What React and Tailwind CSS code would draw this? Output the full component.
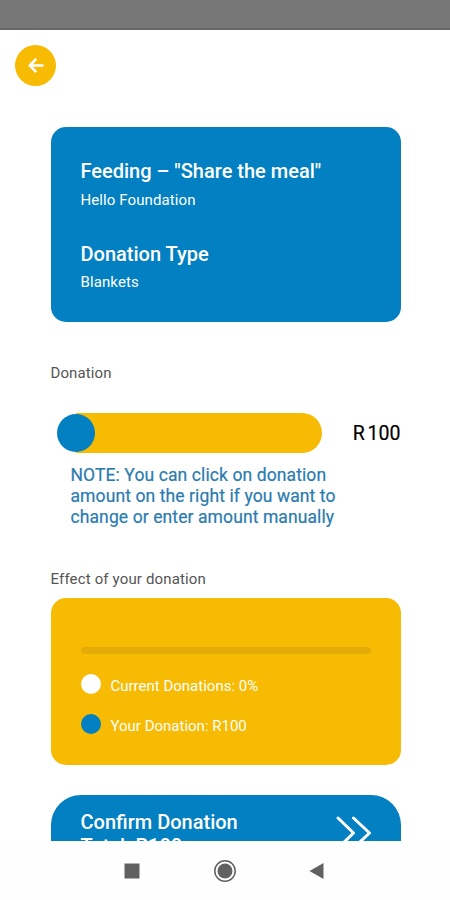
const legend = [
  { label: 'Current Donations: 0%', dot: 'bg-white' },
  { label: 'Your Donation: R100', dot: 'bg-[#0280c1]' },
];

function StatusBar() {
  return <div className="h-[30px] shrink-0 bg-[#777777] border-b-2 border-[#686868]" />;
}

function BackButton() {
  return (
    <button aria-label="Back" className="ml-[15px] mt-[15px] flex h-[41px] w-[41px] items-center justify-center rounded-full bg-[#f6bb02]">
      <svg width="16" height="16" viewBox="0 0 16 16" fill="none" stroke="white" strokeWidth="2.6">
        <path d="M15.5 7.5H2" />
        <path d="M8.2 0.8L1.8 7.5l6.4 6.7" />
      </svg>
    </button>
  );
}

function NavBar() {
  return (
    <nav className="flex h-[59px] shrink-0 items-center justify-center bg-[#fefefe]">
      <svg width="202" height="24" viewBox="0 0 202 24">
        <rect x="0.5" y="4.5" width="15" height="15" fill="#616161" />
        <circle cx="101" cy="12" r="10.2" fill="none" stroke="#616161" strokeWidth="1.5" />
        <circle cx="101" cy="12" r="7.5" fill="#616161" />
        <path d="M185.5 12L199.5 4v16z" fill="#616161" />
      </svg>
    </nav>
  );
}

export default function App() {
  return (
    <div className="flex h-[900px] w-[450px] flex-col overflow-hidden bg-white font-['Roboto',sans-serif]">
      <StatusBar />

      <main className="h-[811px] shrink-0 overflow-hidden">
        <BackButton />

        <div className="ml-[50.5px] mt-[41px] w-[350px]">
          {/* Campaign */}
          <div className="h-[194.5px] rounded-[15px] bg-[#0280c1] px-[30px] pt-8 text-white">
            <h1 className="text-[20px] leading-6 font-medium whitespace-nowrap">Feeding – "Share the meal"</h1>
            <p className="mt-2 text-[15px] leading-[18px] tracking-[0.1px]">Hello Foundation</p>
            <h2 className="mt-[33px] text-[20px] leading-6 font-medium">Donation Type</h2>
            <p className="mt-[7px] text-[15px] leading-[18px] tracking-[0.1px]">Blankets</p>
          </div>

          {/* Amount */}
          <p className="mt-[42.5px] text-[15px] leading-[18px] tracking-[0.1px] text-[#555555]">Donation</p>
          <div className="mt-[31px] flex items-center justify-between">
            <div className="ml-[6px] flex h-10 w-[265px] items-center rounded-r-full bg-linear-to-r from-white from-[19px] to-[#f6bb02] to-[19px]">
              <div className="h-[38px] w-[38px] rounded-full bg-[#0280c1]" />
            </div>
            <span className="pt-0.5 text-[19.5px] leading-6 [word-spacing:-2px] text-black [-webkit-text-stroke:0.2px_black]">R 100</span>
          </div>
          <p className="ml-5 mt-3 text-[17.5px] leading-[21px] tracking-[0.1px] whitespace-nowrap text-[#2a7bb0] [-webkit-text-stroke:0.2px_#2a7bb0]">
            NOTE: You can click on donation
            <br />
            amount on the right if you want to
            <br />
            change or enter amount manually
          </p>

          {/* Effect */}
          <p className="mt-[42px] text-[15px] leading-[18px] tracking-[0.15px] text-[#555555]">Effect of your donation</p>
          <div className="mt-[10px] h-[167px] rounded-[15px] bg-[#f6bb02] px-[30px] pt-[49px]">
            <div className="h-[7px] rounded-full bg-[#e5ac08]" />
            {legend.map(item => (
              <div key={item.label} className="mt-5 flex h-5 items-center gap-[10px]">
                <div className={`h-5 w-5 shrink-0 rounded-full ${item.dot}`} />
                <span className="pt-[3px] text-[15px] leading-[18px] text-white">{item.label}</span>
              </div>
            ))}
          </div>

          {/* Confirm */}
          <button className="mt-[30px] flex h-[75px] w-full items-start justify-between rounded-[30px] bg-[#0280c1] pr-[28.5px] pt-[15px] pl-[30px] text-left text-white">
            <span className="text-[20px] leading-6 font-medium">
              Confirm Donation
              <br />
              Total: R100
            </span>
            <svg className="mt-[5px]" width="36" height="36" viewBox="0 0 36 36" fill="none" stroke="white" strokeWidth="3" strokeLinecap="round" strokeLinejoin="round">
              <path d="M2 3L17.5 18L2 33" />
              <path d="M17.5 3L33.5 18L17.5 33" />
            </svg>
          </button>
        </div>
      </main>

      <NavBar />
    </div>
  );
}
